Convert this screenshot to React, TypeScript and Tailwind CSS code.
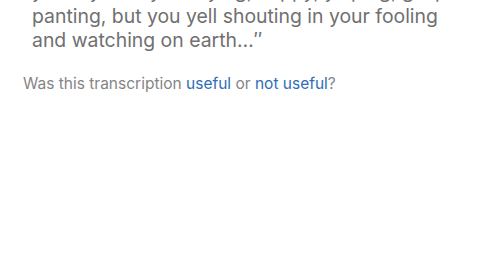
export default function App() {
  return (
    <div className="h-[270px] w-[480px] overflow-hidden bg-white" style={{ fontFamily: 'Inter, "Noto Sans", sans-serif' }}>
      <div className="-mt-[21px]">
        <p className="whitespace-nowrap pl-[32px] text-[19.4px] leading-[24.5px] text-[#707070]">
          you cry as if you crying, happy, yelping, gasp
          <br />
          panting, but you yell shouting in your fooling
          <br />
          and watching on earth…″
        </p>
        <p className="mt-[19px] pl-[23px] text-[15.5px] text-[#858585]">
          Was this transcription <span className="text-[#2f6db5]">useful</span> or{' '}
          <span className="text-[#2f6db5]">not useful</span>?
        </p>
      </div>
    </div>
  );
}
